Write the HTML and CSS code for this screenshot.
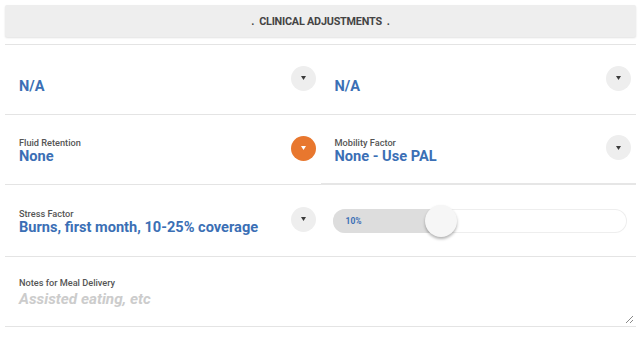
FILE: index.html
```html
<!DOCTYPE html>
<html lang="en">
<head>
  <meta charset="UTF-8" />
  <title>Clinical Adjustments</title>
  <link rel="stylesheet" href="styles.css">
</head>
<body>
  <div class="panel">
    <div class="panel-head">.&nbsp; CLINICAL ADJUSTMENTS &nbsp;.</div>

    <div class="fields">
      <!-- row 1 -->
      <div class="field">
        <div class="field-text">
          <div class="label">&nbsp;</div>
          <div class="value">N/A</div>
        </div>
        <button class="drop"><svg width="5" height="4" viewBox="0 0 5 4"><path d="M0 0h5L2.5 4z" fill="#3a3a3a"/></svg></button>
      </div>
      <div class="field">
        <div class="field-text">
          <div class="label">&nbsp;</div>
          <div class="value">N/A</div>
        </div>
        <button class="drop"><svg width="5" height="4" viewBox="0 0 5 4"><path d="M0 0h5L2.5 4z" fill="#3a3a3a"/></svg></button>
      </div>

      <!-- row 2 -->
      <div class="field">
        <div class="field-text">
          <div class="label">Fluid Retention</div>
          <div class="value">None</div>
        </div>
        <button class="drop active"><svg width="5" height="4" viewBox="0 0 5 4"><path d="M0 0h5L2.5 4z" fill="#fff"/></svg></button>
      </div>
      <div class="field strong-line">
        <div class="field-text">
          <div class="label">Mobility Factor</div>
          <div class="value">None - Use PAL</div>
        </div>
        <button class="drop"><svg width="5" height="4" viewBox="0 0 5 4"><path d="M0 0h5L2.5 4z" fill="#3a3a3a"/></svg></button>
      </div>

      <!-- row 3 -->
      <div class="field tall">
        <div class="field-text">
          <div class="label">Stress Factor</div>
          <div class="value">Burns, first month, 10-25% coverage</div>
        </div>
        <button class="drop"><svg width="5" height="4" viewBox="0 0 5 4"><path d="M0 0h5L2.5 4z" fill="#3a3a3a"/></svg></button>
      </div>
      <div class="field tall slider-cell">
        <div class="slider">
          <div class="slider-fill" style="width:37%;">
            <span class="slider-value">10%</span>
            <span class="slider-thumb"></span>
          </div>
        </div>
      </div>

      <!-- row 4 -->
      <div class="notes">
        <div class="label">Notes for Meal Delivery</div>
        <div class="placeholder">Assisted eating, etc</div>
        <svg class="grip" width="9" height="9" viewBox="0 0 9 9">
          <path d="M1 8L8 1M5 8L8 5" stroke="#888" stroke-width="1"/>
        </svg>
      </div>
    </div>
  </div>
</body>
</html>
```

FILE: styles.css
```css
body {
  margin: 0;
  font-family: Roboto, "Liberation Sans", sans-serif;
  background: #fff;
}

.panel {
  padding: 5px 5px 0 5px;
}

.panel-head {
  height: 32px;
  box-sizing: border-box;
  padding-top: 2px;
  line-height: 30px;
  background: #eeeeee;
  border-radius: 2px;
  box-shadow: 0 1px 2px rgba(0,0,0,0.12);
  text-align: center;
  font-size: 10.8px;
  font-weight: bold;
  color: #444;
  letter-spacing: -0.2px;
  margin-bottom: 7px;
}

.fields {
  display: grid;
  grid-template-columns: 1fr 1fr;
  border-top: 1px solid #e4e4e4;
}

.field {
  height: 70px;
  box-sizing: border-box;
  border-bottom: 1px solid #e4e4e4;
  display: flex;
  align-items: center;
  justify-content: space-between;
  padding: 0 3px 0 14px;
}

.field.tall {
  height: 72px;
}

.field.strong-line {
  border-bottom: 2px solid #e6e6e6;
}

.field-text {
  display: flex;
  flex-direction: column;
  margin-top: 3px;
}

.label {
  font-size: 9.2px;
  font-weight: 500;
  color: #555;
  line-height: 11px;
}

.value {
  font-size: 14.6px;
  font-weight: bold;
  color: #3b6fb5;
  line-height: 17px;
}

.drop {
  width: 25px;
  height: 25px;
  border-radius: 50%;
  border: none;
  background: #eeeeee;
  display: flex;
  align-items: center;
  justify-content: center;
  padding: 0;
  margin-right: 2px;
  margin-top: -3px;
  cursor: pointer;
}

.drop.active {
  background: #e8772e;
}

.slider-cell {
  padding: 0 9px 0 12px;
}

.slider {
  flex: 1;
  height: 24px;
  border-radius: 12px;
  background: #fff;
  box-shadow: inset 0 0 0 1px #eeeeee;
}

.slider-fill {
  position: relative;
  height: 100%;
  background: #dddddd;
  border-radius: 12px 0 0 12px;
  display: flex;
  align-items: center;
}

.slider-value {
  font-size: 8.5px;
  font-weight: bold;
  color: #3b6fb5;
  margin-left: 13px;
}

.slider-thumb {
  position: absolute;
  right: -16px;
  top: -4px;
  width: 32px;
  height: 32px;
  border-radius: 50%;
  background: #f6f6f6;
  box-shadow: 0 2px 3px rgba(0,0,0,0.3);
}

.notes {
  grid-column: 1 / 3;
  position: relative;
  height: 70px;
  box-sizing: border-box;
  border-bottom: 1px solid #e4e4e4;
  padding: 20px 14px 0 14px;
}

.placeholder {
  font-size: 15.3px;
  font-weight: bold;
  font-style: italic;
  color: #cccccc;
  line-height: 19px;
  margin-top: 2px;
}

.grip {
  position: absolute;
  right: 2px;
  bottom: 2px;
}
```
